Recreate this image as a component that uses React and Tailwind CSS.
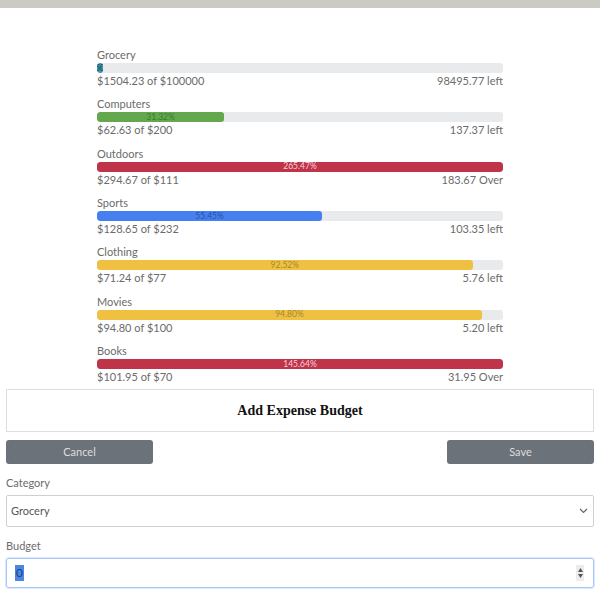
import React from "react";

const items = [
  { name: "Grocery", spent: "$1504.23 of $100000", rest: "98495.77 left", pct: 1.5, label: "1.50%", bar: "bg-[#3d91ab]", txt: "text-[#1d4a5a]" },
  { name: "Computers", spent: "$62.63 of $200", rest: "137.37 left", pct: 31.32, label: "31.32%", bar: "bg-[#64a84e]", txt: "text-[#3a7a2c]" },
  { name: "Outdoors", spent: "$294.67 of $111", rest: "183.67 Over", pct: 100, label: "265.47%", bar: "bg-[#c0344a]", txt: "text-[#f3d3d8]" },
  { name: "Sports", spent: "$128.65 of $232", rest: "103.35 left", pct: 55.45, label: "55.45%", bar: "bg-[#4680f0]", txt: "text-[#2452a8]" },
  { name: "Clothing", spent: "$71.24 of $77", rest: "5.76 left", pct: 92.52, label: "92.52%", bar: "bg-[#efc042]", txt: "text-[#a8882e]" },
  { name: "Movies", spent: "$94.80 of $100", rest: "5.20 left", pct: 94.8, label: "94.80%", bar: "bg-[#efc042]", txt: "text-[#a8882e]" },
  { name: "Books", spent: "$101.95 of $70", rest: "31.95 Over", pct: 100, label: "145.64%", bar: "bg-[#c0344a]", txt: "text-[#f3d3d8]" },
];

export default function App() {
  return (
    <div className="w-[600px] h-[600px] bg-white overflow-hidden text-[#6b6b6b]" style={{ fontFamily: "Lato, 'Noto Sans', sans-serif" }}>
      <div className="h-[8px] bg-[#cbcbc3]" />
      <div className="w-[406px] mx-auto pt-[40px] flex flex-col">
        {items.map((it) => (
          <div key={it.name} className="flex flex-col mb-[9.33px]">
            <div className="h-[14px] leading-[14px] text-[11px]">{it.name}</div>
            <div className="mt-[1px] h-[10px] rounded-[3px] bg-[#e9eaec] overflow-hidden flex">
              <div
                className={`${it.bar} h-full rounded-[3px] flex items-center justify-center overflow-hidden`}
                style={{ width: `${it.pct}%` }}
              >
                <span className={`${it.txt} text-[8.5px] leading-none whitespace-nowrap`}>{it.label}</span>
              </div>
            </div>
            <div className="h-[15px] leading-[15px] text-[11px] flex justify-between">
              <span>{it.spent}</span>
              <span>{it.rest}</span>
            </div>
          </div>
        ))}
      </div>
      <div className="px-[6px] mt-[-4px]">
        <div className="h-[43px] border border-[#dedede] flex items-center justify-center">
          <span className="text-[14px] font-bold text-[#111]" style={{ fontFamily: "'Liberation Serif', serif" }}>Add Expense Budget</span>
        </div>
        <div className="mt-[8px] flex justify-between">
          <div className="w-[147px] h-[24px] rounded-[3px] bg-[#6c7279] flex items-center justify-center text-[11px] text-[#dedede]">Cancel</div>
          <div className="w-[147px] h-[24px] rounded-[3px] bg-[#6c7279] flex items-center justify-center text-[11px] text-[#dedede]">Save</div>
        </div>
        <div className="mt-[12px] h-[14px] leading-[14px] text-[11px]">Category</div>
        <div className="mt-[5px] h-[32px] border border-[#cfcfcf] rounded-[2px] flex items-center justify-between px-[4px] text-[11px] text-[#555]">
          <span>Grocery</span>
          <svg width="9" height="6" viewBox="0 0 9 6" className="mr-[1px]">
            <path d="M1 1l3.5 3.5L8 1" fill="none" stroke="#666" strokeWidth="1.2" />
          </svg>
        </div>
        <div className="mt-[12px] h-[14px] leading-[14px] text-[11px]">Budget</div>
        <div className="mt-[5px] h-[30px] border-[1.5px] border-[#a9c7f7] rounded-[3px] shadow-[0_0_0_1px_#dbe8fd] flex items-center justify-between pl-[8px] pr-[9px] text-[12px]">
          <span className="bg-[#4a86e8] text-[#1c3d7a] px-[1px] leading-[16px]">0</span>
          <div className="flex flex-col items-center justify-center w-[8px] h-[16px] bg-[#ececec] gap-[2px]">
            <svg width="5" height="4" viewBox="0 0 5 4"><path d="M0 4L2.5 0L5 4z" fill="#555" /></svg>
            <svg width="5" height="4" viewBox="0 0 5 4"><path d="M0 0L2.5 4L5 0z" fill="#555" /></svg>
          </div>
        </div>
      </div>
    </div>
  );
}
